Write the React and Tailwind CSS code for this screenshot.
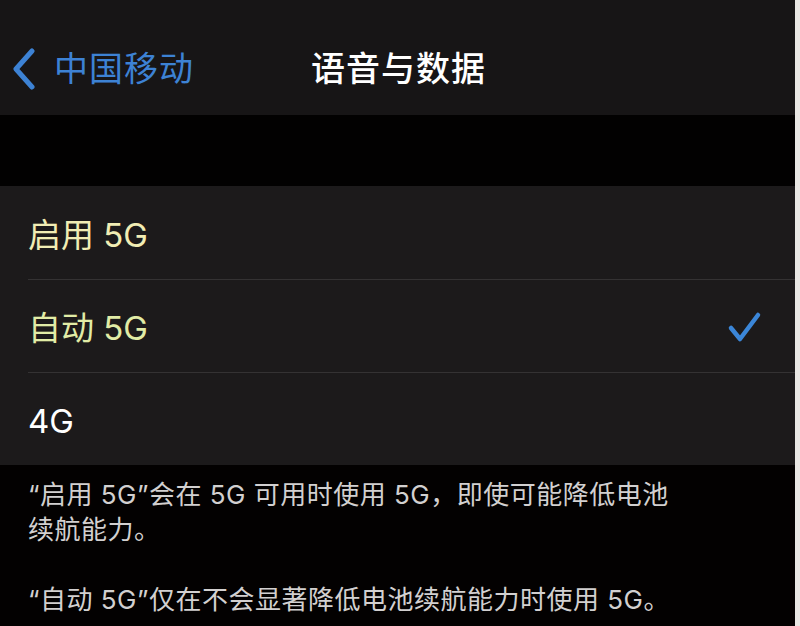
const font = { fontFamily: 'Inter, "Noto Sans CJK SC", sans-serif' }

const options = [
  { label: '启用 5G', color: 'text-[#f1edb4]' },
  { label: '自动 5G', color: 'text-[#e1eca6]', checked: true },
  { label: '4G', color: 'text-white' },
]

function BackChevron() {
  return (
    <svg width="26" height="42" viewBox="0 0 26 42" fill="none">
      <path d="M21 3 L5 21 L21 39" stroke="currentColor" strokeWidth="5" strokeLinecap="round" strokeLinejoin="round" />
    </svg>
  )
}

function Tick() {
  return (
    <svg width="36" height="36" viewBox="0 0 36 36" fill="none">
      <path d="M4 19 L13 30 L31 6" stroke="currentColor" strokeWidth="4.5" strokeLinecap="round" strokeLinejoin="round" />
    </svg>
  )
}

export default function App() {
  return (
    <div className="flex h-[626px] w-[800px] overflow-hidden bg-black" style={font}>
      <div className="flex w-[795px] flex-col">
        {/* nav bar */}
        <div className="relative flex h-[115px] items-center bg-[#171516] pt-[22px]">
          <div className="flex items-center pl-[11px] text-[#3d82d4]">
            <BackChevron />
            <span className="ml-[17px] text-[34px] tracking-[1px]">中国移动</span>
          </div>
          <span className="absolute left-[311px] text-[34px] font-medium tracking-[1px] text-white">语音与数据</span>
        </div>

        <div className="h-[71px] bg-[#020101]" />

        {/* options */}
        <div className="bg-[#1c1a1b]">
          {options.map((o, i) => (
            <div key={o.label} className="flex h-[93px] items-stretch pl-[28px]">
              <div className={`flex flex-1 items-center justify-between pr-[32px] ${i > 0 ? 'border-t border-[#343233]' : ''}`}>
                <span className={`pt-[6px] text-[33px] ${o.color}`}>{o.label}</span>
                {o.checked && <span className="pt-[2px] text-[#3b86d8]"><Tick /></span>}
              </div>
            </div>
          ))}
        </div>

        {/* footer notes */}
        <div className="flex-1 bg-[#030101] px-[28px] pt-[12px] text-[26px] leading-[35px] tracking-[0.5px] text-[#d2d0d0]">
          <p>“启用 5G”会在 5G 可用时使用 5G，即使可能降低电池<br />续航能力。</p>
          <p className="mt-[35px]">“自动 5G”仅在不会显著降低电池续航能力时使用 5G。</p>
        </div>
      </div>
      <div className="w-[5px] bg-[#e9e7e4]" />
    </div>
  )
}
